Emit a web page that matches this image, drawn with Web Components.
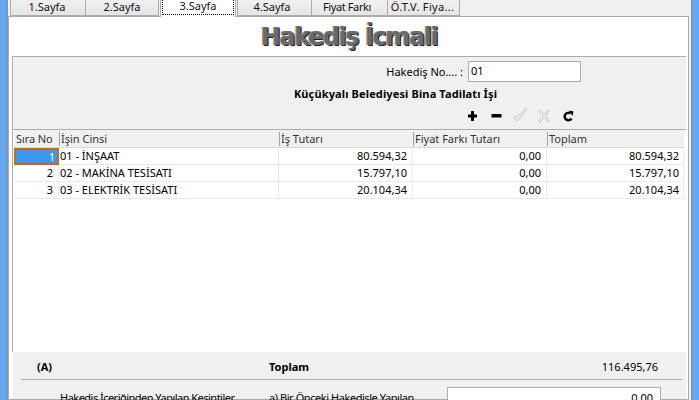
<!DOCTYPE html>
<html lang="tr"><head><meta charset="utf-8"><title>Hakediş İcmali</title>
<style>
html,body{margin:0;padding:0;width:699px;height:400px;overflow:hidden;background:#f0f0f0}
body{font:11px "Noto Sans","Open Sans",sans-serif;color:#000}
</style></head><body>
<app-window>
  <tab-strip slot="tabs"></tab-strip>
  <icmal-page></icmal-page>
</app-window>
<script>
function el(name,html){customElements.define(name,class extends HTMLElement{constructor(){super();this.attachShadow({mode:'open'}).innerHTML=html;}});}
el('app-window',`<style>
:host{display:grid;grid-template-columns:8px 1fr 8px;width:699px;height:400px;overflow:hidden}
.f{background:#66a6ee}
.f.l{border-right:1px solid #8a8f96;box-sizing:border-box}
.f.r{border-left:1px solid #8a8f96;box-sizing:border-box}
.m{background:#f0f0f0;min-width:0;height:400px;display:flex;flex-direction:column;padding-right:2px;box-sizing:border-box}
</style><div class="f l"></div><div class="m"><slot name="tabs"></slot><slot></slot></div><div class="f r"></div>`);
el('tab-strip',`<style>
:host{display:flex;height:16px;padding-left:2px;align-items:flex-start;flex:none;font:11px "Noto Sans",sans-serif;position:relative;z-index:1}
.t{box-sizing:border-box;height:16px;border:1px solid #acacac;border-top:0;background:linear-gradient(#f0f0f0,#e5e5e5);text-align:center;line-height:13px;color:#111;margin-right:-1px;white-space:nowrap}
.a{height:17px;background:#fff;border-bottom:0;margin:0 1px 0 1px;padding:0 1px 2px;line-height:11px}
.a span{display:block;height:15px;box-sizing:border-box;border:1px dotted #000;border-top:0;line-height:11px}
</style>
<div class="t" style="width:76px;padding-right:2px">1.Sayfa</div>
<div class="t" style="width:74px">2.Sayfa</div>
<div class="t a" style="width:76px;margin-left:2px"><span>3.Sayfa</span></div>
<div class="t" style="width:75px;padding-right:5px">4.Sayfa</div>
<div class="t" style="width:77px;letter-spacing:-.4px;padding-right:5px">Fiyat Farkı</div>
<div class="t" style="width:73px;letter-spacing:.3px;padding-right:2px">Ö.T.V. Fiya...</div>`);
el('icmal-page',`<style>
:host{display:flex;flex-direction:column;box-sizing:border-box;flex:1;min-height:0;background:#fff;border:1px solid #acacac;padding:0 2px 0 3px}
h1{margin:0;height:39px;flex:none;text-align:center;font:bold 24px/41px "DejaVu Sans",sans-serif;letter-spacing:-1.45px;color:#666a70;text-shadow:-1px 0 0 #c9a06a,1px 1px 0 #222,1px 0 0 #7fb0e0}
.in{flex:1;min-height:0;display:flex;flex-direction:column}
.head{flex:none;background:#f0f0f0;border-top:1px solid #acacac;border-left:1px solid #acacac}
.no{display:flex;justify-content:flex-end;align-items:center;height:21px;margin-top:4px;padding-right:105px;gap:5px}
.v{box-sizing:border-box;width:113px;height:21px;background:#fff;border:1px solid #acacac;padding-left:2px;line-height:18px}
.ttl{text-align:center;font-weight:700;height:17px;line-height:17px;margin-top:3px;padding-left:92px;letter-spacing:.13px}
.tb{display:flex;justify-content:flex-end;gap:11px;height:27px;padding:8px 111px 0 0;box-sizing:border-box}
.tb svg{width:13px;height:13px;display:block;overflow:visible}
.grid{flex:1;min-height:0;background:#fff;border-top:1px solid #acacac;border-left:1px solid #acacac;display:flex;flex-direction:column;padding:0 2px 0 1px;overflow:hidden}
.r{display:grid;grid-template-columns:45px 220px 134px 134px 1fr;height:17px;flex:none;line-height:16px;box-sizing:border-box}
.h{background:#f0f0f0;height:18px;color:#333;border-bottom:1px solid #d8d8d8}
.h div{border-left:1px solid #a0a0a0;padding-left:1px;margin:2px 0 1px;line-height:14px}
.h div:first-child{border:0;padding-left:2px;letter-spacing:-.1px}
.c{border-right:1px solid #eaeaea;border-bottom:1px solid #eaeaea;padding:0 5px 0 1px;white-space:nowrap;overflow:hidden}
.c:last-child{padding-right:4px}
.n{text-align:right}
.s{background:#3c97f0;color:#fff;border:2px solid #c86a14;line-height:13px;padding-right:2px}
.sp{flex:1}
.foot{flex:none;height:47px;background:#f0f0f0;margin-left:1px}
.a{display:grid;grid-template-columns:248px 1fr auto;height:28px;margin:0 4px 0 8px;border-bottom:1px solid #acacac;align-items:center;box-sizing:border-box;font-weight:700;padding-top:1px}
.a span:first-child{padding-left:16px}
.a .t{font-weight:400;text-align:right;padding-right:24px}
.b{display:grid;grid-template-columns:256px 178px 214px;padding-top:7px;height:12px;overflow:visible}
.b span{line-height:17px;padding-top:2px;white-space:nowrap;letter-spacing:-.44px}
.b span:first-child{padding-left:47px;letter-spacing:-.52px}
.b .box{box-sizing:border-box;height:30px;background:#fff;border:1px solid #acacac;text-align:right;padding-right:7px;line-height:17px;padding-top:1px}
</style>
<h1>Hakediş İcmali</h1>
<div class="in">
 <div class="head">
  <div class="no"><span>Hakediş No.... :</span><div class="v">01</div></div>
  <div class="ttl">Küçükyalı Belediyesi Bina Tadilatı İşi</div>
  <div class="tb">
   <svg viewBox="0 0 13 13"><path d="M5 1h3v3.500h3v3H8V11H5V7.500H2v-3h3z" fill="#000"/></svg>
   <svg viewBox="0 0 13 13"><rect x="1.500" y="4" width="10" height="3.500" fill="#000"/></svg>
   <svg viewBox="0 0 13 13"><path d="M0 8l3 3L13-.5l-1-.5-9 8-2-.5z" fill="#f8f8f8" stroke="#c4c4c4"/></svg>
   <svg viewBox="0 0 13 13"><path d="M1.500 0l5 5 3.500-5 1.500 1-4 5 4 5-1.500 1-4-4.500-4 4.500-1.500-1 4.500-5L.5 1z" fill="#f8f8f8" stroke="#c4c4c4"/></svg>
   <svg viewBox="0 0 13 13"><path d="M9.500 8.500A3.700 3.700 0 1 1 8.500 3.500" fill="none" stroke="#000" stroke-width="2.500"/><path d="M7 .5l4.500 1-1 4.500z" fill="#000"/></svg>
  </div>
 </div>
  <div class="grid">
   <div class="r h"><div>Sıra No</div><div>İşin Cinsi</div><div>İş Tutarı</div><div>Fiyat Farkı Tutarı</div><div>Toplam</div></div>
   <div class="r"><div class="c n s">1</div><div class="c">01 - İNŞAAT</div><div class="c n">80.594,32</div><div class="c n">0,00</div><div class="c n">80.594,32</div></div>
   <div class="r"><div class="c n">2</div><div class="c">02 - MAKİNA TESİSATI</div><div class="c n">15.797,10</div><div class="c n">0,00</div><div class="c n">15.797,10</div></div>
   <div class="r"><div class="c n">3</div><div class="c">03 - ELEKTRİK TESİSATI</div><div class="c n">20.104,34</div><div class="c n">0,00</div><div class="c n">20.104,34</div></div>
   <div class="sp"></div>
  </div>
  <div class="foot">
   <div class="a"><span>(A)</span><span>Toplam</span><span class="t">116.495,76</span></div>
   <div class="b"><span>Hakediş İçeriğinden Yapılan Kesintiler</span><span>a) Bir Önceki Hakedişle Yapılan</span><div class="box">0,00</div></div>
  </div>
 </div>`);
</script>
</body></html>
